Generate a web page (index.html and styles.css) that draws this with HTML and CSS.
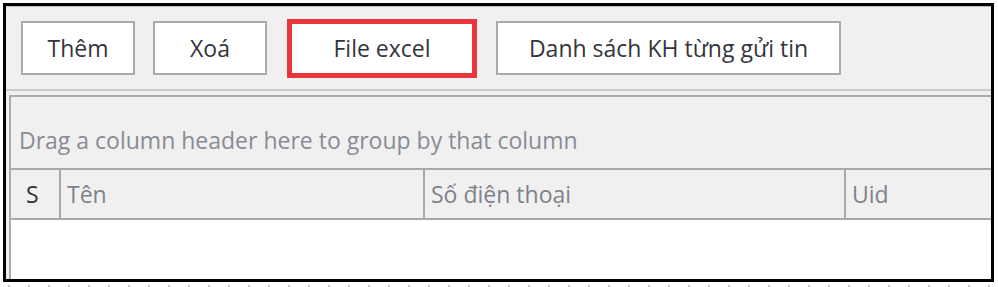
FILE: index.html
```html
<!DOCTYPE html>
<html lang="vi">

<head>
    <meta charset="UTF-8">
    <meta name="viewport" content="width=device-width, initial-scale=1.0">
    <title>Danh sách khách hàng</title>
    <link rel="stylesheet" href="styles.css">
</head>

<body>
    <div class="frame">
        <div class="toolbar">
            <button class="btn">Thêm</button>
            <button class="btn">Xoá</button>
            <span class="mark"><button class="btn">File excel</button></span>
            <button class="btn btn-wide">Danh sách KH từng gửi tin</button>
        </div>

        <div class="grid">
            <div class="group-panel">Drag a column header here to group by that column</div>
            <div class="header">
                <div class="col col-s">S</div>
                <div class="col col-name">Tên</div>
                <div class="col col-phone">Số điện thoại</div>
                <div class="col col-uid">Uid</div>
            </div>
            <div class="rows"></div>
        </div>
    </div>
    <div class="dots"></div>
</body>

</html>
```

FILE: styles.css
```css
* {
    font-family: "Open Sans", "Noto Sans", sans-serif;
    margin: 0;
    padding: 0;
    box-sizing: border-box;
}

body {
    background: #fff;
    padding: 3px 0 0 3px;
}

.frame {
    width: 991px;
    height: 279px;
    border: 3px solid #000;
    background: #f0f0f0;
    display: flex;
    flex-direction: column;
}

/* toolbar with buttons */
.toolbar {
    height: 85px;
    border-top: 1px solid #bdbdbd;
    border-bottom: 2px solid #cacaca;
    display: flex;
    align-items: center;
    gap: 18px;
    padding-left: 15px;
}

.btn {
    width: 114px;
    height: 54px;
    background: #fff;
    border: 2px solid #ababab;
    font-size: 23px;
    color: #34353c;
}

.btn-wide {
    width: 345px;
}

.mark {
    display: flex;
    width: 190px;
    height: 59px;
    margin: 0 1px 0 2px;
    border: 5px solid #e8363c;
}

.mark .btn {
    width: 100%;
    height: 100%;
    border: none;
}

/* grid */
.grid {
    flex: 1;
    margin: 4px 0 0 3px;
    border-top: 2px solid #ababab;
    border-left: 2px solid #ababab;
    display: flex;
    flex-direction: column;
}

.group-panel {
    height: 71px;
    padding: 28px 0 0 8px;
    font-size: 23px;
    line-height: 30px;
    color: #8a8b96;
}

.header {
    height: 52px;
    border-top: 2px solid #a9a9a9;
    border-bottom: 2px solid #a9a9a9;
    display: flex;
}

.col {
    display: flex;
    align-items: center;
    padding-left: 6px;
    border-right: 2px solid #a9a9a9;
    font-size: 23px;
    color: #80818c;
}

.col-s {
    width: 50px;
    padding-left: 15px;
    color: #333;
}

.col-name {
    width: 364px;
}

.col-phone {
    width: 421px;
}

.col-uid {
    flex: 1;
    border-right: none;
}

.rows {
    flex: 1;
    background: #fff;
}

.dots {
    width: 995px;
    height: 2px;
    margin-top: 3px;
    background: repeating-linear-gradient(to right, transparent 0 5px, #c6c6d4 5px 7px, transparent 7px 20px);
}
```
